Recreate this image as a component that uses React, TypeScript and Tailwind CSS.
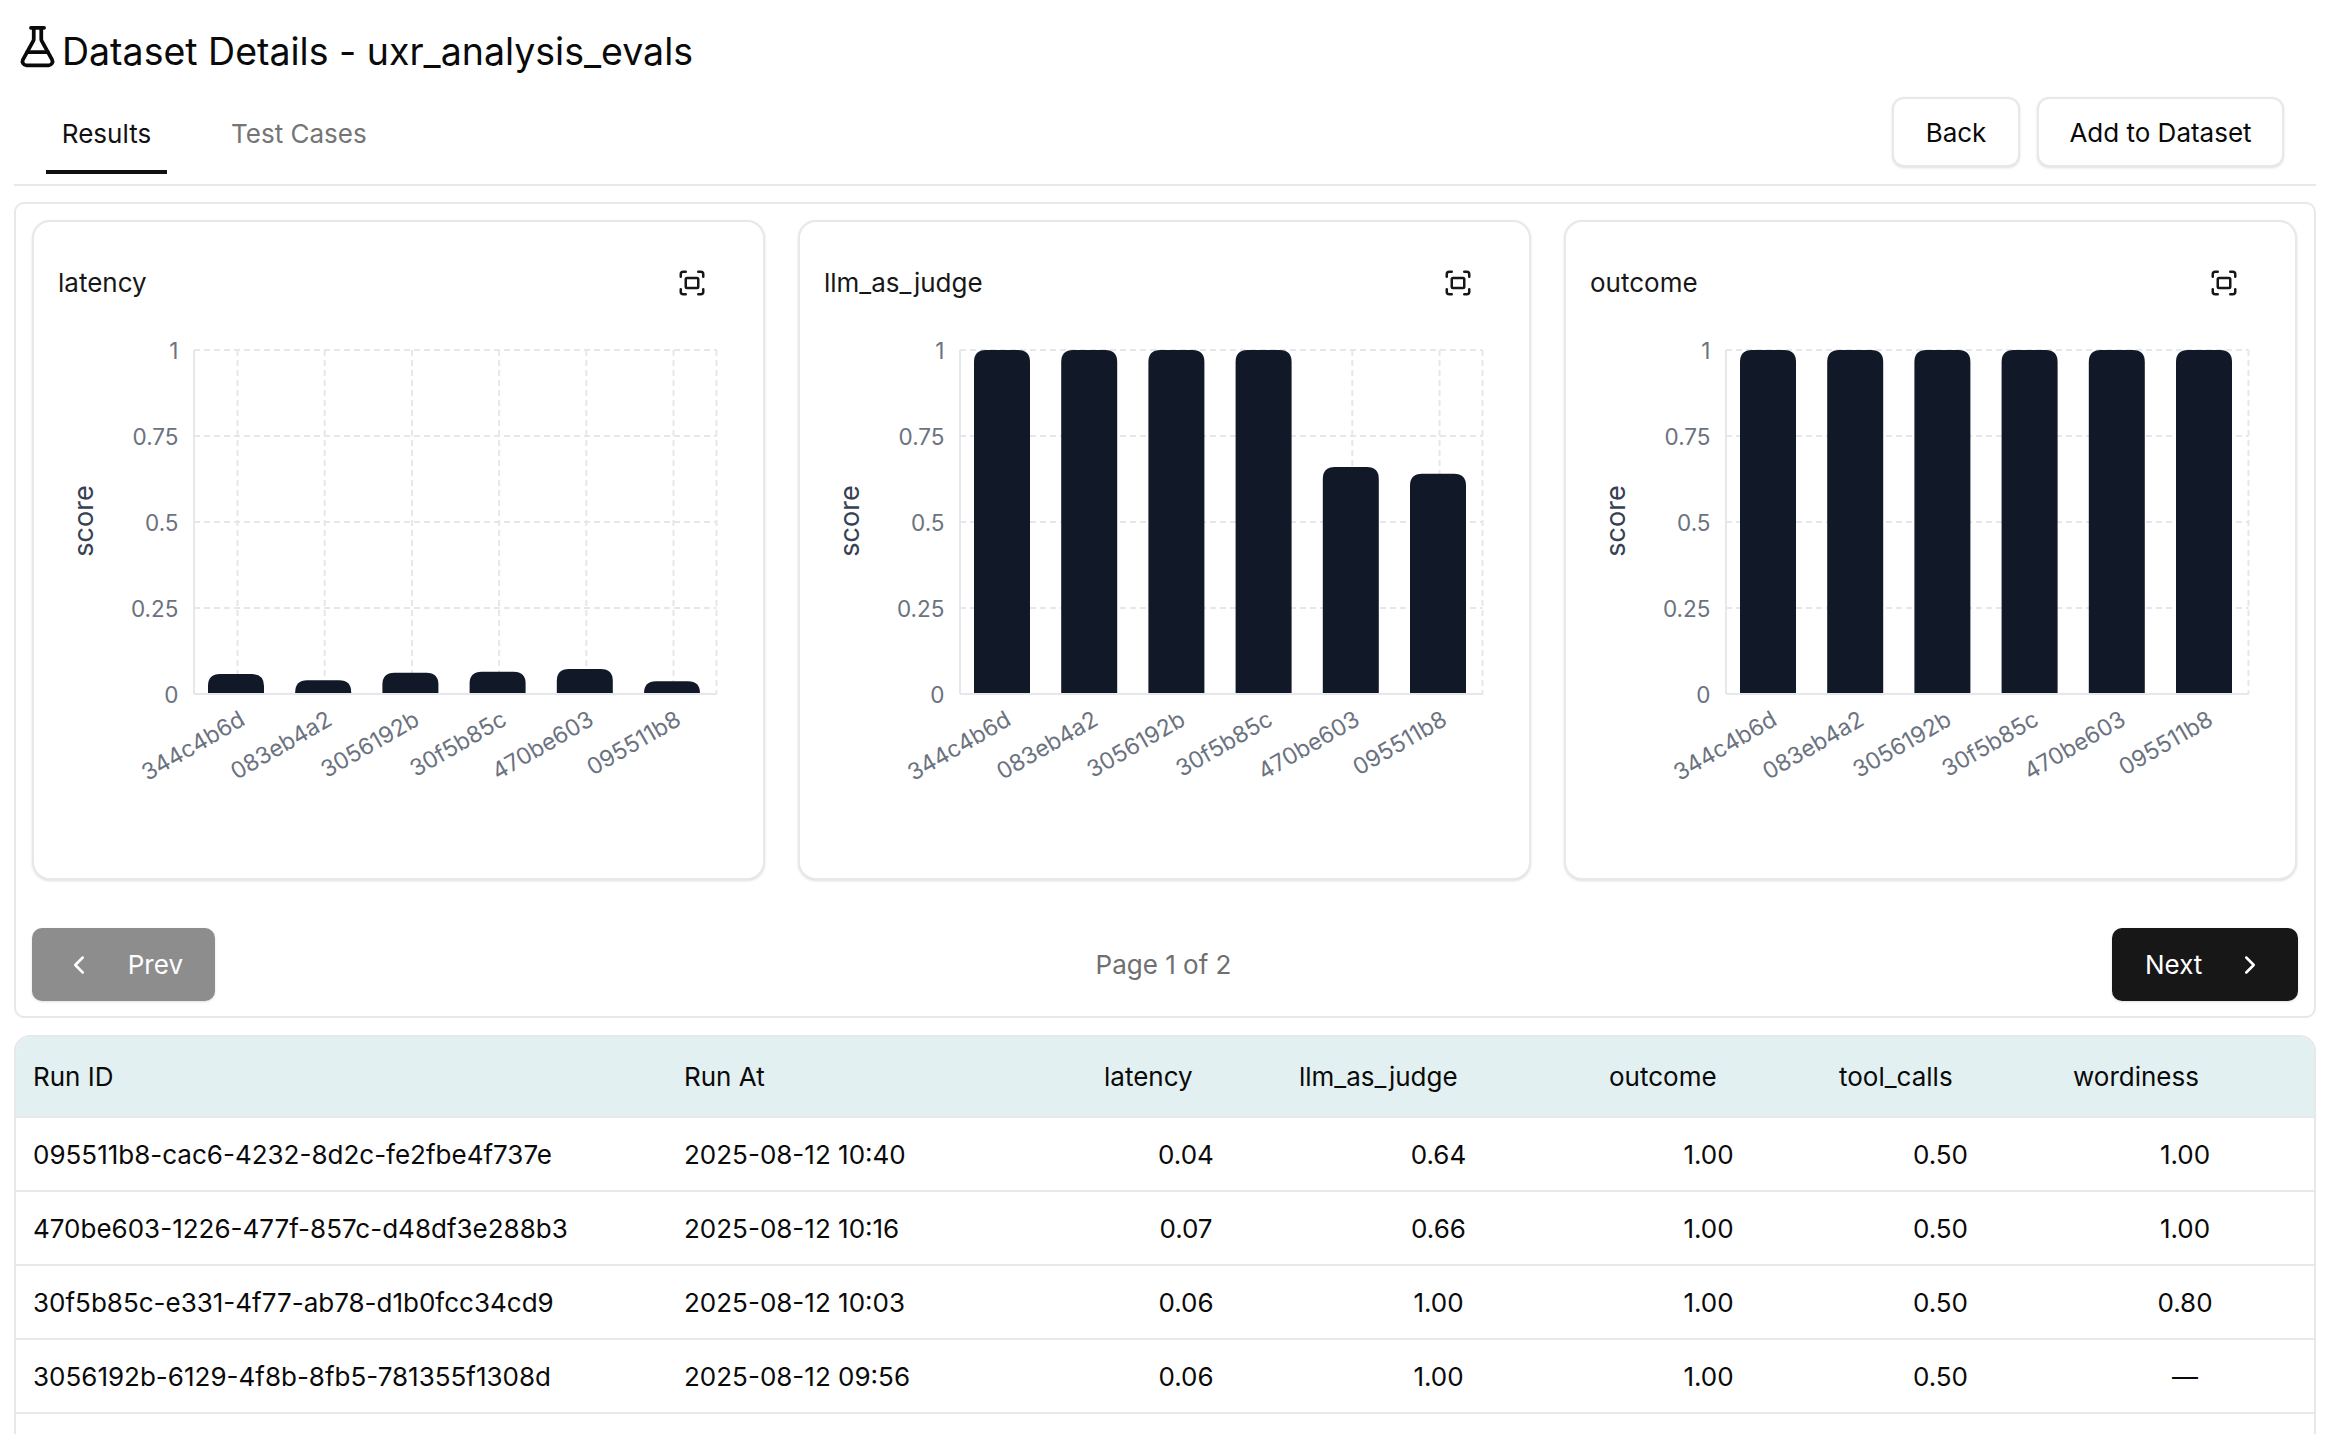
import { ChevronLeft, ChevronRight, FlaskConical, Fullscreen } from "lucide-react";

const labels = ["344c4b6d", "083eb4a2", "3056192b", "30f5b85c", "470be603", "095511b8"];
const ticks = [
  { label: "1", y: 20 },
  { label: "0.75", y: 106 },
  { label: "0.5", y: 192 },
  { label: "0.25", y: 278 },
  { label: "0", y: 364 },
];

const charts = [
  { name: "latency", values: [0.058, 0.04, 0.062, 0.065, 0.073, 0.037] },
  { name: "llm_as_judge", values: [1, 1, 1, 1, 0.66, 0.64] },
  { name: "outcome", values: [1, 1, 1, 1, 1, 1] },
];

const rows = [
  ["095511b8-cac6-4232-8d2c-fe2fbe4f737e", "2025-08-12 10:40", "0.04", "0.64", "1.00", "0.50", "1.00"],
  ["470be603-1226-477f-857c-d48df3e288b3", "2025-08-12 10:16", "0.07", "0.66", "1.00", "0.50", "1.00"],
  ["30f5b85c-e331-4f77-ab78-d1b0fcc34cd9", "2025-08-12 10:03", "0.06", "1.00", "1.00", "0.50", "0.80"],
  ["3056192b-6129-4f8b-8fb5-781355f1308d", "2025-08-12 09:56", "0.06", "1.00", "1.00", "0.50", "—"],
];

function barPath(x: number, top: number, w: number, bottom: number) {
  const r = Math.min(12, bottom - top);
  return `M${x} ${bottom}V${top + r}Q${x} ${top} ${x + r} ${top}H${x + w - r}Q${x + w} ${top} ${x + w} ${top + r}V${bottom}Z`;
}

function cellClass(i: number) {
  if (i < 2) return "px-[17px]";
  if (i === 6) return "px-[17px] text-center";
  return "pl-[20px] pr-[17px] text-center";
}

function Chart({ name, values }: { name: string; values: number[] }) {
  const left = 161;
  const right = 683.5;
  const top = 20;
  const bottom = 364;
  const step = 87.2;
  return (
    <div className="flex h-[660px] flex-col rounded-[18px] border-2 border-[#e7e8eb] bg-white shadow-sm">
      <div className="flex h-[108px] items-center justify-between pl-[24px] pr-[56px] pt-[13px] text-[26px] text-[#171717]">
        <span>{name}</span>
        <Fullscreen size={30} strokeWidth={2} />
      </div>
      <svg width="729" height="540" viewBox="1 0 729 540" className="block">
        {ticks.map((t) => (
          <line key={t.y} x1={left} x2={right} y1={t.y} y2={t.y} stroke="#e5e7eb" strokeWidth="2" strokeDasharray="6 4" />
        ))}
        {[...labels.keys(), 6].map((i) => {
          const x = i === 6 ? right : 204.5 + i * step;
          return <line key={i} x1={x} x2={x} y1={top} y2={bottom} stroke="#e5e7eb" strokeWidth="2" strokeDasharray="6 4" />;
        })}
        <line x1={left} x2={left} y1={top} y2={bottom} stroke="#e5e7eb" strokeWidth="2" />
        {values.map((v, i) => {
          const x = 175 + i * step;
          return <path key={i} d={barPath(x, bottom - v * 344, 56, bottom)} fill="#111827" />;
        })}
        <line x1={left} x2={right} y1={bottom} y2={bottom} stroke="#e5e7eb" strokeWidth="2" />
        {ticks.map((t) => (
          <text key={t.label} x="145.5" y={t.y + 9} textAnchor="end" fontSize="22.5" fill="#6b7280">
            {t.label}
          </text>
        ))}
        {labels.map((l, i) => {
          const x = 213.5 + i * step;
          const y = 394;
          return (
            <text key={l} x={x} y={y} textAnchor="end" fontSize="23" fill="#6b7280" transform={`rotate(-30 ${x} ${y})`}>
              {l}
            </text>
          );
        })}
        <text x="50.5" y="191" textAnchor="middle" fontSize="27" fill="#374151" transform="rotate(-90 50.5 191)" dominantBaseline="central">
          score
        </text>
      </svg>
    </div>
  );
}

export default function App() {
  return (
    <div className="h-screen overflow-hidden bg-white pl-[14px] pr-[20px] font-['Inter',sans-serif] text-[26px] text-[#0a0a0a]">
      <div className="flex items-start pt-[25px]">
        <FlaskConical size={45} strokeWidth={2} className="-mt-[1px] ml-[1px]" />
        <h1 className="ml-[2px] text-[37.5px] leading-[54px]">Dataset Details - uxr_analysis_evals</h1>
      </div>

      <div className="flex h-[107px] items-start justify-between border-b-2 border-[#e7e8eb] pt-[18px]">
        <div className="flex pl-[32px]">
          <button className="flex h-[77px] w-[121px] items-center justify-center border-b-[4px] border-[#111] text-[#111]">Results</button>
          <button className="ml-[47px] flex h-[77px] items-center justify-center pb-[4px] pl-[17px] pr-[17px] text-[#757575]">Test Cases</button>
        </div>
        <div className="mr-[32px] flex gap-[17px]">
          <button className="h-[70px] w-[128px] rounded-[12px] border-2 border-[#e7e8eb] bg-white pt-[1px] shadow-sm">Back</button>
          <button className="h-[70px] w-[247px] rounded-[12px] border-2 border-[#e7e8eb] bg-white pt-[1px] shadow-sm">Add to Dataset</button>
        </div>
      </div>

      <section className="mt-[16px] rounded-[10px] border-2 border-[#e7e8eb] p-[16px] pb-[15px]">
        <div className="grid grid-cols-[733px_733px_733px] gap-[33px]">
          {charts.map((c) => (
            <Chart key={c.name} name={c.name} values={c.values} />
          ))}
        </div>
        <div className="mt-[48px] flex items-center justify-between">
          <button className="flex h-[73px] w-[183px] items-center justify-between rounded-[10px] bg-[#8d8d8d] pl-[32px] pr-[32px] text-white shadow-sm">
            <ChevronLeft size={30} />
            <span>Prev</span>
          </button>
          <span className="text-[#6f6f6f]">Page 1 of 2</span>
          <button className="flex h-[73px] w-[186px] items-center justify-between rounded-[10px] bg-[#171717] pl-[33px] pr-[33px] text-white shadow-sm">
            <span>Next</span>
            <ChevronRight size={30} />
          </button>
        </div>
      </section>

      <div className="mt-[17px] overflow-hidden rounded-t-[16px] border-2 border-[#e7e8eb]">
        <table className="w-full table-fixed border-collapse">
          <colgroup>
            <col className="w-[651px]" />
            <col className="w-[420px]" />
            <col className="w-[195px]" />
            <col className="w-[310px]" />
            <col className="w-[230px]" />
            <col className="w-[234px]" />
            <col />
          </colgroup>
          <thead>
            <tr className="h-[80px] border-b-2 border-[#e7e8eb] bg-[#e2f0f1] text-left">
              {["Run ID", "Run At", "latency", "llm_as_judge", "outcome", "tool_calls", "wordiness"].map((h) => (
                <th key={h} className="px-[17px] font-normal">
                  {h}
                </th>
              ))}
            </tr>
          </thead>
          <tbody>
            {rows.map((r) => (
              <tr key={r[0]} className="h-[74px] border-b-2 border-[#e7e8eb]">
                {r.map((v, i) => (
                  <td key={i} className={cellClass(i)}>
                    {v}
                  </td>
                ))}
              </tr>
            ))}
            <tr className="h-[74px]">
              <td colSpan={7}>&nbsp;</td>
            </tr>
          </tbody>
        </table>
      </div>
    </div>
  );
}
